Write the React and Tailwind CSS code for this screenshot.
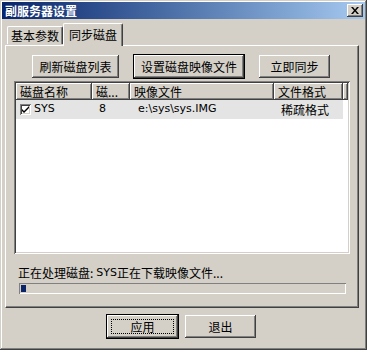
import React from "react";

const raised =
  "bg-[#d4d0c8] shadow-[inset_-1px_-1px_#404040,inset_1px_1px_#ffffff,inset_-2px_-2px_#808080,inset_2px_2px_#d4d0c8]";
const sunken =
  "shadow-[inset_1px_1px_#808080,inset_-1px_-1px_#ffffff,inset_2px_2px_#404040,inset_-2px_-2px_#d4d0c8]";
const cjk = { fontFamily: '"Noto Sans CJK SC", "Liberation Sans", sans-serif' };

const columns = [
  { label: "磁盘名称", w: "w-[76px]" },
  { label: "磁...", w: "w-[38px]" },
  { label: "映像文件", w: "w-[144px]" },
  { label: "文件格式", w: "w-[69px]" },
];

function Button({ label, className = "", isDefault = false, focus = false }) {
  return (
    <div
      className={`relative h-[23px] flex items-center justify-center text-[12px] text-black ${raised} ${
        isDefault ? "outline outline-1 outline-black" : ""
      } ${className}`}
    >
      {focus && (
        <div className="absolute inset-[4px] border border-dotted border-black" />
      )}
      <span className="relative">{label}</span>
    </div>
  );
}

export default function App() {
  return (
    <div
      className="w-[367px] h-[350px] bg-[#d4d0c8] p-[2px] flex flex-col shadow-[inset_-1px_-1px_#404040,inset_1px_1px_#d4d0c8,inset_-2px_-2px_#808080,inset_2px_2px_#ffffff]"
      style={cjk}
    >
      {/* title bar */}
      <div className="h-[17px] flex items-center justify-between bg-gradient-to-r from-[#0a246a] to-[#a6caf0] pl-[3px] pr-[2px]">
        <span className="text-white font-bold text-[12px] leading-none">副服务器设置</span>
        <div className={`w-[16px] h-[13px] flex items-center justify-center ${raised}`}>
          <svg width="8" height="7" viewBox="0 0 8 7">
            <path d="M0 0h2l2 2.5L6 0h2L5 3.5 8 7H6L4 4.5 2 7H0l3-3.5z" fill="#000" />
          </svg>
        </div>
      </div>

      {/* tabs */}
      <div className="mt-[4px] pl-[3px] pr-[6px]">
        <div className="flex items-end h-[22px] pl-[2px]">
          <div className="h-[18px] w-[56px] flex items-center justify-center text-[12px] mb-[1px] border-t border-l border-white border-r border-r-[#404040] rounded-tl-[2px] rounded-tr-[2px] shadow-[inset_-1px_0_#808080]">
            基本参数
          </div>
          <div className="relative z-10 h-[23px] w-[60px] -ml-[0px] -mb-[1px] flex items-start pt-[2px] justify-center text-[12px] bg-[#d4d0c8] border-t border-l border-white border-r border-r-[#404040] rounded-tl-[2px] rounded-tr-[2px] shadow-[inset_-1px_0_#808080]">
            同步磁盘
          </div>
        </div>

        {/* panel */}
        <div className="h-[263px] w-[354px] border-t border-l border-white border-r border-b border-r-[#404040] border-b-[#404040] shadow-[inset_-1px_-1px_#808080] pt-[9px] pl-[8px]">
          <div className="flex items-center h-[23px]">
            <Button label="刷新磁盘列表" className="ml-[18px] w-[87px]" />
            <Button label="设置磁盘映像文件" className="ml-[15px] w-[110px]" isDefault />
            <Button label="立即同步" className="ml-[15px] w-[71px]" />
          </div>

          {/* list view */}
          <div className={`mt-[3px] w-[336px] h-[173px] bg-white p-[2px] ${sunken}`}>
            <div className="flex h-[17px] bg-[#d4d0c8]">
              {columns.map((c) => (
                <div
                  key={c.label}
                  className={`${c.w} h-full flex items-center pl-[4px] text-[12px] ${raised}`}
                >
                  {c.label}
                </div>
              ))}
              <div className={`flex-1 h-full ${raised}`} />
            </div>
            <div className="flex items-center h-[19px] w-[327px] bg-[#e4e4e4] text-[11px]" style={{ fontFamily: '"DejaVu Sans", "Noto Sans CJK SC", sans-serif' }}>
              <div className="w-[76px] flex items-center pl-[4px]">
                <div className={`w-[11px] h-[11px] bg-white flex items-center justify-center ${sunken}`}>
                  <svg width="7" height="7" viewBox="0 0 7 7">
                    <path d="M0 3l2 2 5-5v2L2 7 0 5z" fill="#000" />
                  </svg>
                </div>
                <span className="ml-[3px]">SYS</span>
              </div>
              <div className="w-[38px] pl-[7px]">8</div>
              <div className="w-[144px] pl-[8px]">e:\sys\sys.IMG</div>
              <div className="w-[69px] pl-[7px] text-[12px]" style={cjk}>稀疏格式</div>
            </div>
          </div>

          <div className="mt-[11px] pl-[4px] h-[16px] flex items-center text-[12px]">
            <span>正在处理磁盘: </span>
            <span className="ml-[3px]" style={{ fontFamily: '"DejaVu Sans", sans-serif', fontSize: "11px" }}>SYS</span>
            <span>正在下载映像文件...</span>
          </div>
          <div className={`mt-[2px] ml-[5px] w-[327px] h-[11px] p-[2px] ${sunken} shadow-[inset_1px_1px_#808080,inset_-1px_-1px_#ffffff]`}>
            <div className="w-[5px] h-full bg-[#0a246a]" />
          </div>
        </div>
      </div>

      {/* bottom buttons */}
      <div className="flex mt-[7px] pl-[105px]">
        <Button label="应用" className="w-[71px]" isDefault focus />
        <Button label="退出" className="ml-[7px] w-[71px]" />
      </div>
    </div>
  );
}
